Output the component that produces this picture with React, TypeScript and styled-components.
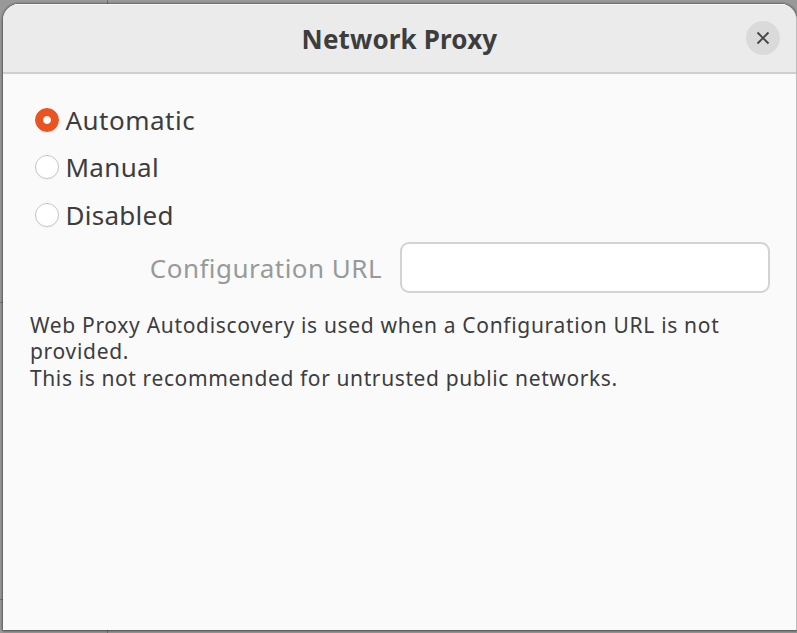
import React, { useState } from 'react';
import styled, { createGlobalStyle } from 'styled-components';

const GlobalStyle = createGlobalStyle`
  html, body { margin: 0; padding: 0; overflow: hidden; }
  * { box-sizing: border-box; }
`;

const Desktop = styled.div`
  width: 797px;
  height: 633px;
  padding: 4px 0 3px 3px;
  overflow: hidden;
  background:
    linear-gradient(#737373, #737373) 107px 0 / 1px 100% no-repeat,
    linear-gradient(#737373, #737373) 0 302px / 3px 1px no-repeat,
    linear-gradient(#737373, #737373) 0 599px / 3px 1px no-repeat,
    #999;
  font-family: 'Noto Sans', sans-serif;
  color: #3d3d3d;
`;

const Dialog = styled.section`
  display: flex;
  flex-direction: column;
  width: 794px;
  height: 626px;
  background: #fafafa;
  border-right: 1px solid #bcbcbc;
  border-radius: 16px 16px 0 0;
  overflow: hidden;
  box-shadow: 0 0 2px 1px rgba(0, 0, 0, 0.3), 0 1px 3px rgba(0, 0, 0, 0.3);
`;

const HeaderBar = styled.header`
  display: grid;
  grid-template-columns: 52px 1fr 52px;
  align-items: center;
  flex: none;
  height: 70px;
  background: #ebebeb;
  border-bottom: 2px solid #cfcfcf;
  box-shadow: inset 0 1px #f7f7f7;
`;

const Title = styled.h1`
  grid-column: 2;
  margin: 2px 0 0;
  text-align: center;
  font-size: 26px;
  line-height: 36px;
  font-weight: 700;
  letter-spacing: 0.15px;
  white-space: nowrap;
`;

const CloseButton = styled.button`
  display: grid;
  place-items: center;
  width: 34px;
  height: 34px;
  margin-left: 2px;
  padding: 0;
  border: 0;
  border-radius: 50%;
  background: #dadada;
`;

const Content = styled.div`
  display: flex;
  flex-direction: column;
  padding: 22px 26px 0 27px;
`;

const Option = styled.label`
  display: flex;
  align-items: center;
  gap: 6px;
  height: 47.5px;
  padding-left: 5.4px;
`;

const Radio = styled.input`
  appearance: none;
  flex: none;
  width: 24px;
  height: 24px;
  margin: 0;
  border: 1.5px solid #c6c6c6;
  border-radius: 50%;
  background: #fff;
  box-shadow: 0 1px 1px rgba(0, 0, 0, 0.04);
  &:checked {
    border-color: #e95420;
    background: radial-gradient(circle, #fff 3.4px, #e95420 4.4px);
    background-origin: border-box;
  }
`;

const Label = styled.span<{ $spacing: number }>`
  font-size: 26px;
  line-height: 36px;
  letter-spacing: ${(p) => p.$spacing}px;
  white-space: nowrap;
`;

const UrlRow = styled.div`
  display: grid;
  grid-template-columns: 352px 370px;
  column-gap: 18px;
  align-items: center;
  height: 51px;
  margin-top: 3px;
`;

const UrlLabel = styled(Label).attrs({ as: 'label' })`
  justify-self: end;
  padding-top: 1px;
  color: #989a99;
`;

const UrlInput = styled.input`
  width: 370px;
  height: 51px;
  padding: 0 14px;
  border: 2px solid #d3d3d3;
  border-radius: 9px;
  background: #fff;
  font: inherit;
  outline: none;
`;

const Hint = styled.p`
  margin: 19px 0 0;
  font-size: 21px;
  line-height: 26.7px;
`;

const HintLine = styled.span<{ $spacing: number }>`
  display: block;
  white-space: nowrap;
  letter-spacing: ${(p) => p.$spacing}px;
`;

const options = [
  { name: 'Automatic', spacing: 0.5 },
  { name: 'Manual', spacing: 0.35 },
  { name: 'Disabled', spacing: 0.3 },
];

const hints = [
  { text: 'Web Proxy Autodiscovery is used when a Configuration URL is not', spacing: 0.68 },
  { text: 'provided.', spacing: 0.7 },
  { text: 'This is not recommended for untrusted public networks.', spacing: 0.61 },
];

export default function App() {
  const [mode, setMode] = useState('Automatic');
  return (
    <Desktop>
      <GlobalStyle />
      <Dialog>
        <HeaderBar>
          <Title>Network Proxy</Title>
          <CloseButton aria-label="Close">
            <svg width="14" height="14" viewBox="0 0 14 14" fill="none" stroke="#444" strokeWidth="1.9">
              <path d="M1.5 1.5 12.5 12.5M12.5 1.5 1.5 12.5" />
            </svg>
          </CloseButton>
        </HeaderBar>
        <Content>
          {options.map((o) => (
            <Option key={o.name}>
              <Radio type="radio" name="mode" checked={mode === o.name} onChange={() => setMode(o.name)} />
              <Label $spacing={o.spacing}>{o.name}</Label>
            </Option>
          ))}
          <UrlRow>
            <UrlLabel $spacing={0.47}>Configuration URL</UrlLabel>
            <UrlInput aria-label="Configuration URL" />
          </UrlRow>
          <Hint>
            {hints.map((h) => (
              <HintLine key={h.text} $spacing={h.spacing}>{h.text}</HintLine>
            ))}
          </Hint>
        </Content>
      </Dialog>
    </Desktop>
  );
}
